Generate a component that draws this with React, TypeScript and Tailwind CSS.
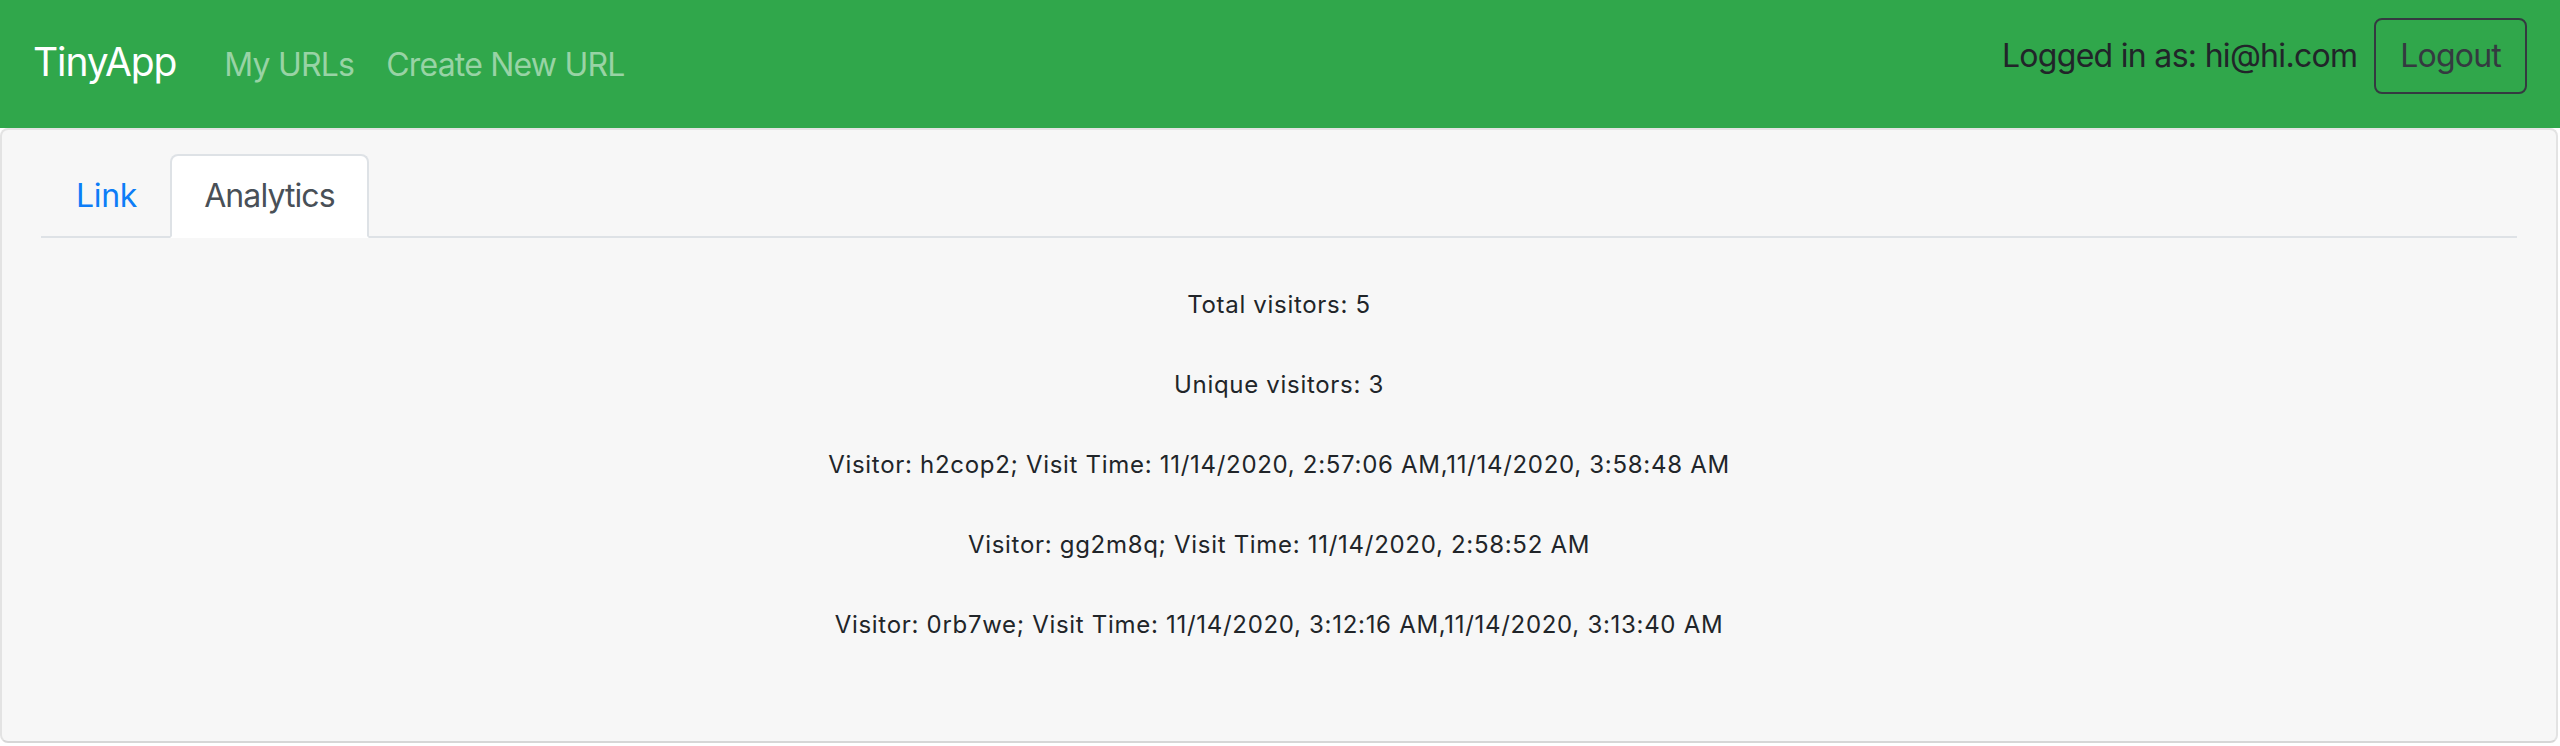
const visits = [
  'Visitor: h2cop2; Visit Time: 11/14/2020, 2:57:06 AM,11/14/2020, 3:58:48 AM',
  'Visitor: gg2m8q; Visit Time: 11/14/2020, 2:58:52 AM',
  'Visitor: 0rb7we; Visit Time: 11/14/2020, 3:12:16 AM,11/14/2020, 3:13:40 AM',
];

export default function App() {
  return (
    <div className="min-h-screen bg-white font-['Inter',sans-serif] text-[#212529]">
      <nav className="flex h-[128px] items-start justify-between bg-[#30a74b] px-[33px]">
        <div className="mt-[32px] flex items-baseline">
          <a className="mr-[32px] text-[39px] leading-[60px] tracking-[-1.1px] text-white">TinyApp</a>
          <a className="px-[16px] text-[32px] leading-[48px] tracking-[-0.8px] text-[#98d3a5]">My URLs</a>
          <a className="px-[16px] text-[32px] leading-[48px] tracking-[-0.8px] text-[#98d3a5]">Create New URL</a>
        </div>
        <div className="mt-[18px] flex items-center gap-[17px]">
          <span className="text-[32px] leading-[48px] tracking-[-0.7px] text-[#212529]">Logged in as: hi@hi.com</span>
          <button className="h-[76px] rounded-[8px] border-2 border-[#343a40] px-[24px] text-[32px] leading-[48px] tracking-[-0.8px] text-[#343a40]">
            Logout
          </button>
        </div>
      </nav>

      <div className="mr-[2px] rounded-[8px] border-2 border-[#e3e3e3] border-b-[#d6d6d6] bg-[#f7f7f7]">
        <div className="mx-[39px] flex border-b-2 border-[#dee2e6] pt-[24px]">
          <a className="-mb-[2px] border-2 border-transparent pl-[33px] pr-[31px] py-[16px] text-[32px] leading-[48px] tracking-[-0.3px] text-[#0d7df7]">
            Link
          </a>
          <a className="-mb-[2px] rounded-t-[8px] border-2 border-[#dee2e6] border-b-white bg-white px-[32px] py-[16px] text-[32px] leading-[48px] tracking-[-0.9px] text-[#495057]">
            Analytics
          </a>
        </div>
        <div className="flex flex-col items-center gap-[32px] pt-[43px] pb-[92px] text-center text-[24px] leading-[48px] tracking-[0.7px]">
          <p>Total visitors: 5</p>
          <p>Unique visitors: 3</p>
          {visits.map((v) => (
            <p key={v}>{v}</p>
          ))}
        </div>
      </div>
    </div>
  );
}
